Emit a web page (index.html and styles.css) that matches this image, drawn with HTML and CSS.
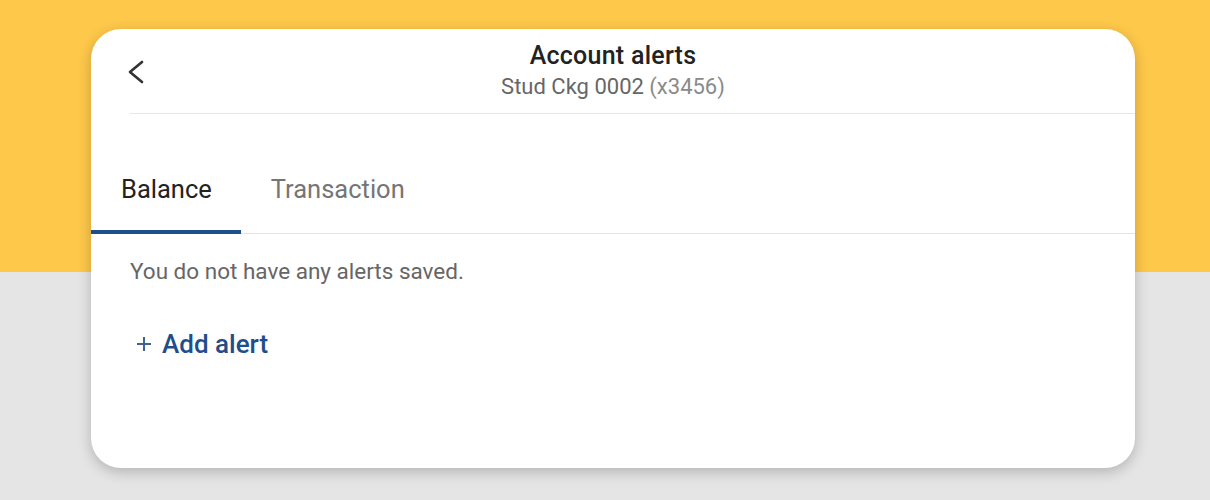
FILE: index.html
```html
<!DOCTYPE html>
<html lang="en">
<head>
<meta charset="utf-8">
<title>Account alerts</title>
<link rel="stylesheet" href="styles.css">
</head>
<body>
<div class="page">
  <div class="card">
    <header class="header">
      <button class="back" aria-label="Back">
        <svg width="20" height="24" viewBox="0 0 20 24"><path d="M16 2 L4 12 L16 22" fill="none" stroke="#333" stroke-width="2.6" stroke-linecap="round" stroke-linejoin="round"/></svg>
      </button>
      <div class="titles">
        <div class="title">Account alerts</div>
        <div class="subtitle">Stud Ckg 0002 <span class="mask">(x3456)</span></div>
      </div>
      <div class="spacer"></div>
    </header>
    <nav class="tabs">
      <div class="tab active">Balance</div>
      <div class="tab">Transaction</div>
    </nav>
    <section class="content">
      <p class="empty">You do not have any alerts saved.</p>
      <button class="add">
        <svg width="16" height="16" viewBox="0 0 16 16"><path d="M8 1 V15 M1 8 H15" stroke="#3d6299" stroke-width="2" fill="none"/></svg>
        <span>Add alert</span>
      </button>
    </section>
  </div>
</div>
</body>
</html>
```

FILE: styles.css
```css
* { box-sizing: border-box; }
html, body { margin: 0; padding: 0; }
body {
  font-family: Roboto, "Liberation Sans", Arial, sans-serif;
  background: linear-gradient(to bottom, #fec84a 0, #fec84a 272px, #e5e5e5 272px, #e5e5e5 100%);
  min-height: 500px;
}
.page {
  padding: 29px 0 0 91px;
}
.card {
  width: 1044px;
  height: 439px;
  background: #fff;
  border-radius: 30px;
  box-shadow: 0 4px 14px rgba(0, 0, 0, 0.22);
  overflow: hidden;
}
.header {
  margin-left: 39px;
  padding: 12px 39px 13px 0;
  border-bottom: 1px solid #e6e6e6;
  display: grid;
  grid-template-columns: 1fr auto 1fr;
  align-items: center;
}
.back {
  justify-self: start;
  margin-left: -4px;
  margin-top: 2px;
  padding: 0;
  border: 0;
  background: none;
  width: 20px;
  height: 24px;
  display: flex;
}
.titles { text-align: center; }
.title {
  font-size: 25px;
  line-height: 30px;
  font-weight: 500;
  letter-spacing: 0.25px;
  color: #222;
}
.subtitle {
  margin-top: 3px;
  font-size: 22px;
  line-height: 26px;
  color: #666;
}
.mask { color: #8a8a8a; }
.tabs {
  display: flex;
  padding-top: 60px;
  border-bottom: 1px solid #e3e3e3;
}
.tab {
  padding: 0 29px 26px 30px;
  font-size: 25.5px;
  line-height: 30px;
  color: #757575;
  border-bottom: 4px solid transparent;
  margin-bottom: -1px;
}
.tab.active {
  color: #222;
  border-bottom-color: #1c4f8b;
}
.content {
  padding: 23px 39px 0;
}
.empty {
  margin: 0;
  font-size: 22.5px;
  line-height: 28px;
  color: #666;
}
.add {
  margin-top: 44px;
  margin-left: 6px;
  padding: 0;
  border: 0;
  background: none;
  display: flex;
  align-items: center;
  gap: 10px;
  font-family: inherit;
  font-size: 26px;
  line-height: 30px;
  font-weight: 500;
  color: #1f4e8a;
}
```
